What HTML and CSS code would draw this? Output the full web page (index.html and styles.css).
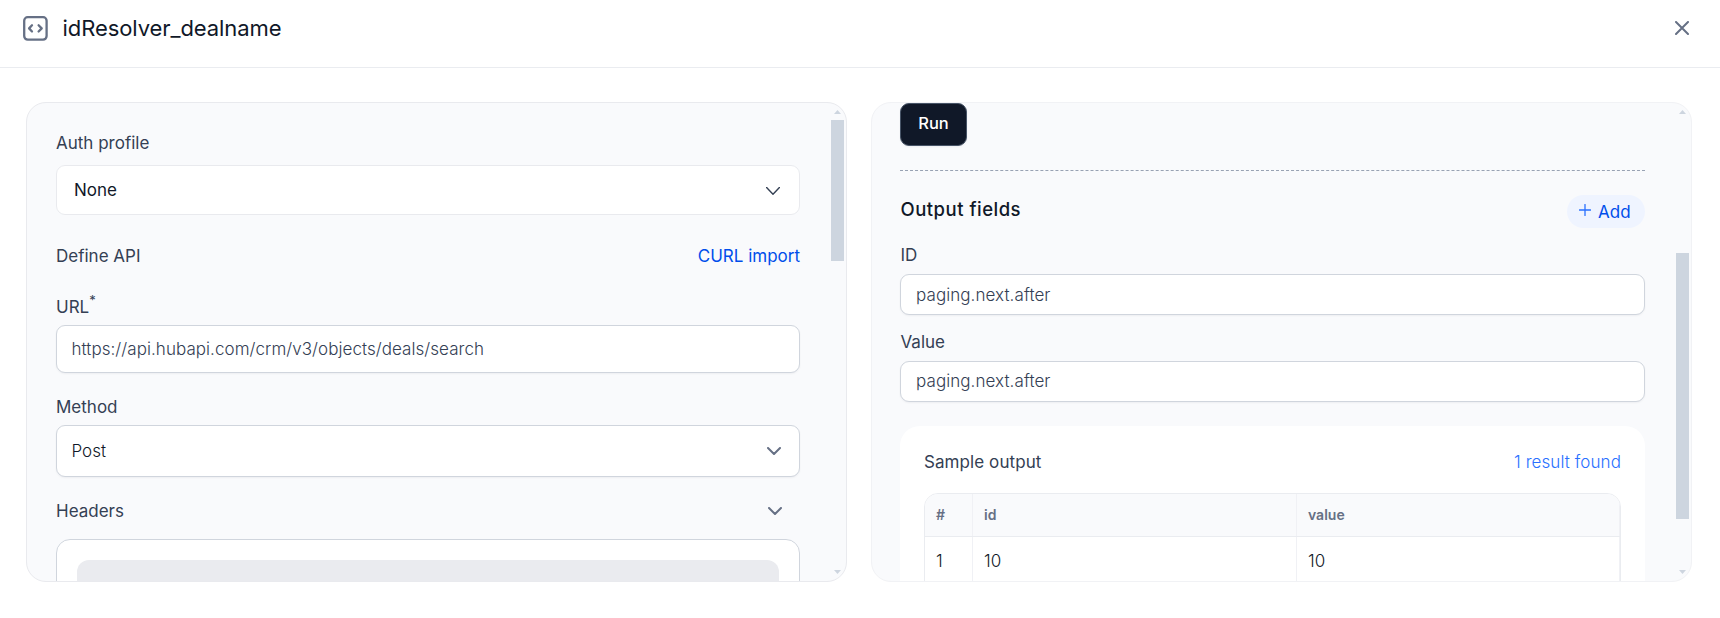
FILE: index.html
```html
<!DOCTYPE html>
<html lang="en">
<head>
<meta charset="utf-8">
<title>idResolver_dealname</title>
<link rel="stylesheet" href="styles.css">
</head>
<body>
<header class="topbar">
  <svg class="code-icon" width="25" height="25" viewBox="0 0 25 25"><rect x="1.2" y="1.2" width="22.400" height="22.400" rx="3.500"/><path d="M9 9.300 6.100 12.400 9 15.500M15.600 9.300 18.700 12.400 15.600 15.500"/></svg>
  <h1 class="title">idResolver_dealname</h1>
  <svg class="close-icon" width="14" height="14" viewBox="0 0 14 14"><path d="M1 1 13 13M13 1 1 13"/></svg>
</header>
<main class="panels">
  <section class="panel panel-api">
    <div class="label"><span>Auth profile</span></div>
    <div class="select select-auth"><span>None</span><svg width="14" height="8" viewBox="0 0 14 8"><path d="M.6.6 7 7.200 13.400.6"/></svg></div>
    <div class="row define"><span>Define API</span><a class="link">CURL import</a></div>
    <div class="label"><span>URL</span><sup class="star">*</sup></div>
    <div class="input input-url"><span>https://api.hubapi.com/crm/v3/objects/deals/search</span></div>
    <div class="label label-method"><span>Method</span></div>
    <div class="select select-method"><span>Post</span><svg width="14" height="8" viewBox="0 0 14 8"><path d="M1 1 7 7 13 1"/></svg></div>
    <div class="row headers"><span>Headers</span><svg width="14" height="8" viewBox="0 0 14 8"><path d="M1 1 7 7 13 1"/></svg></div>
    <div class="headers-box"><div class="headers-fill"></div></div>
    <div class="scrollbar"><i class="arrow-up"></i><i class="thumb thumb-api"></i><i class="arrow-down"></i></div>
  </section>
  <section class="panel panel-output">
    <button class="run">Run</button>
    <div class="divider"></div>
    <div class="output-head"><h2>Output fields</h2><button class="add"><svg width="12" height="12" viewBox="0 0 12 12"><path d="M6 .5V11.500M.5 6H11.500"/></svg><span>Add</span></button></div>
    <div class="label label-id"><span>ID</span></div>
    <div class="input input-short"><span>paging.next.after</span></div>
    <div class="label label-value"><span>Value</span></div>
    <div class="input input-short input-value"><span>paging.next.after</span></div>
    <div class="card">
      <div class="row sample"><span>Sample output</span><a class="found">1 result found</a></div>
      <div class="table">
        <div class="tr th"><span>#</span><span>id</span><span>value</span></div>
        <div class="tr td"><span>1</span><span>10</span><span>10</span></div>
      </div>
    </div>
    <div class="scrollbar"><i class="arrow-up"></i><i class="thumb thumb-output"></i><i class="arrow-down"></i></div>
  </section>
</main>
</body>
</html>
```
FILE: styles.css
```css
* { box-sizing: border-box; }
body {
  margin: 0;
  height: 618px;
  overflow: hidden;
  background: #fff;
  font-family: Inter, "Liberation Sans", sans-serif;
  font-size: 17px;
  line-height: 24px;
  color: #344054;
  white-space: nowrap;
}
svg { fill: none; stroke: #667085; stroke-width: 2; stroke-linecap: round; stroke-linejoin: round; display: block; flex: none; }
.topbar {
  height: 68px;
  padding: 16px 31px 0 23px;
  border-bottom: 1px solid #eaecf0;
  display: flex;
  align-items: flex-start;
}
.code-icon { stroke-width: 2.300; }
.title { margin: 0 auto 0 14.500px; font-size: 22px; line-height: 24px; font-weight: 400; letter-spacing: -.08px; color: #101828; }
.close-icon { margin-top: 5px; }
.panels { display: grid; grid-template-columns: 821px 821px; gap: 24px; padding: 34px 0 0 26px; }
.panel {
  position: relative;
  height: 480px;
  overflow: hidden;
  border: 1px solid #e9eaee;
  border-radius: 20px;
  background: #f9fafc;
}
.panel-api { padding: 28px 46px 0 29px; }
.panel-output { padding: 0 46px 0 28px; border-color: #f1f2f5; }
.label { height: 24px; display: flex; }
.panel-output .label { padding-left: .5px; }
.row { height: 24px; display: flex; justify-content: space-between; align-items: center; }
.link { color: #004eeb; }
.select, .input {
  display: flex;
  align-items: center;
  justify-content: space-between;
  background: #fff;
  border: 1px solid #d0d5dd;
  border-radius: 9px;
  box-shadow: 0 1px 2px rgba(16, 24, 40, .05);
}
.select { color: #101828; }
.select-auth { height: 50px; margin-top: 10px; padding: 0 19px 0 17px; border-color: #e9eaee; box-shadow: none; }
.select-auth svg { stroke: #344054; stroke-width: 1.4; margin-top: 2px; }
.define { margin: 29px 0 27px; }
.star { margin-top: -5px; font-size: 13px; line-height: 20px; }
.input { font-weight: 300; letter-spacing: .07px; padding: 0 15px; }
.input-url { height: 48px; margin-top: 6px; padding-left: 14.500px; letter-spacing: .05px; }
.label-method { margin-top: 22px; }
.select-method { height: 52px; margin-top: 6px; padding: 0 18.500px 0 14.500px; font-weight: 300; }
.headers { margin-top: 22px; padding-right: 18.500px; }
.headers-box { height: 80px; margin-top: 16px; padding: 20px; border: 1px solid #d0d5dd; border-radius: 14px; background: #fff; }
.headers-fill { height: 60px; border-radius: 12px; background: #eaebef; }
.scrollbar { position: absolute; top: 0; right: 2px; width: 13px; height: 478px; }
.thumb { position: absolute; left: 0; width: 13px; background: #cdd5df; }
.thumb-api { top: 17px; height: 141px; }
.thumb-output { top: 150px; height: 266px; }
.arrow-up, .arrow-down { position: absolute; left: 3px; width: 7px; height: 4px; background: #cdd5df; }
.arrow-up { top: 7px; clip-path: polygon(50% 0, 100% 100%, 0 100%); }
.arrow-down { bottom: 7px; clip-path: polygon(0 0, 100% 0, 50% 100%); }
.run {
  display: block;
  width: 67px;
  height: 43px;
  padding: 0 0 3px;
  border: 1px solid #475467;
  border-radius: 9px;
  background: #101828;
  color: #fff;
  font: 500 16.500px/24px Inter, sans-serif;
  box-shadow: 0 1px 2px rgba(16, 24, 40, .05);
}
.divider { margin-top: 24px; border-top: 1px dashed #98a2b3; }
.output-head { height: 33px; margin-top: 24px; display: flex; justify-content: space-between; }
.output-head h2 { margin: 2px 0 0 .5px; font-size: 18.500px; line-height: 24px; font-weight: 500; letter-spacing: .5px; color: #101828; }
.add {
  width: 78px;
  height: 33px;
  padding: 0 0 0 12px;
  border: 0;
  border-radius: 17px;
  background: #eff4ff;
  color: #004eeb;
  font: 400 17px/24px Inter, sans-serif;
  display: flex;
  align-items: center;
  gap: 7px;
}
.add svg { stroke: #2970ff; stroke-width: 1.300; margin-top: -3px; }
.label-id { margin-top: 15px; }
.input-short { height: 41px; margin-top: 7px; }
.input-value { padding-bottom: 2px; }
.label-value { margin-top: 15px; }
.card { height: 200px; margin-top: 24px; padding: 24px 24px 0; border-radius: 20px; background: #fff; }
.sample { letter-spacing: .08px; }
.found { color: #2970ff; font-weight: 300; }
.table { height: 120px; margin-top: 19px; border: 1px solid #eaecf0; border-radius: 14px; overflow: hidden; }
.tr { display: grid; grid-template-columns: 48px 324px 1fr; }
.tr span { padding-left: 11px; border-right: 1px solid #f0f1f5; display: flex; align-items: center; }
.th { height: 43px; background: #f9fafc; border-bottom: 1px solid #eaecf0; font-size: 14px; font-weight: 600; color: #667085; }
.td { height: 76px; font-weight: 300; color: #101828; }
.td span { padding-bottom: 28px; }
```
